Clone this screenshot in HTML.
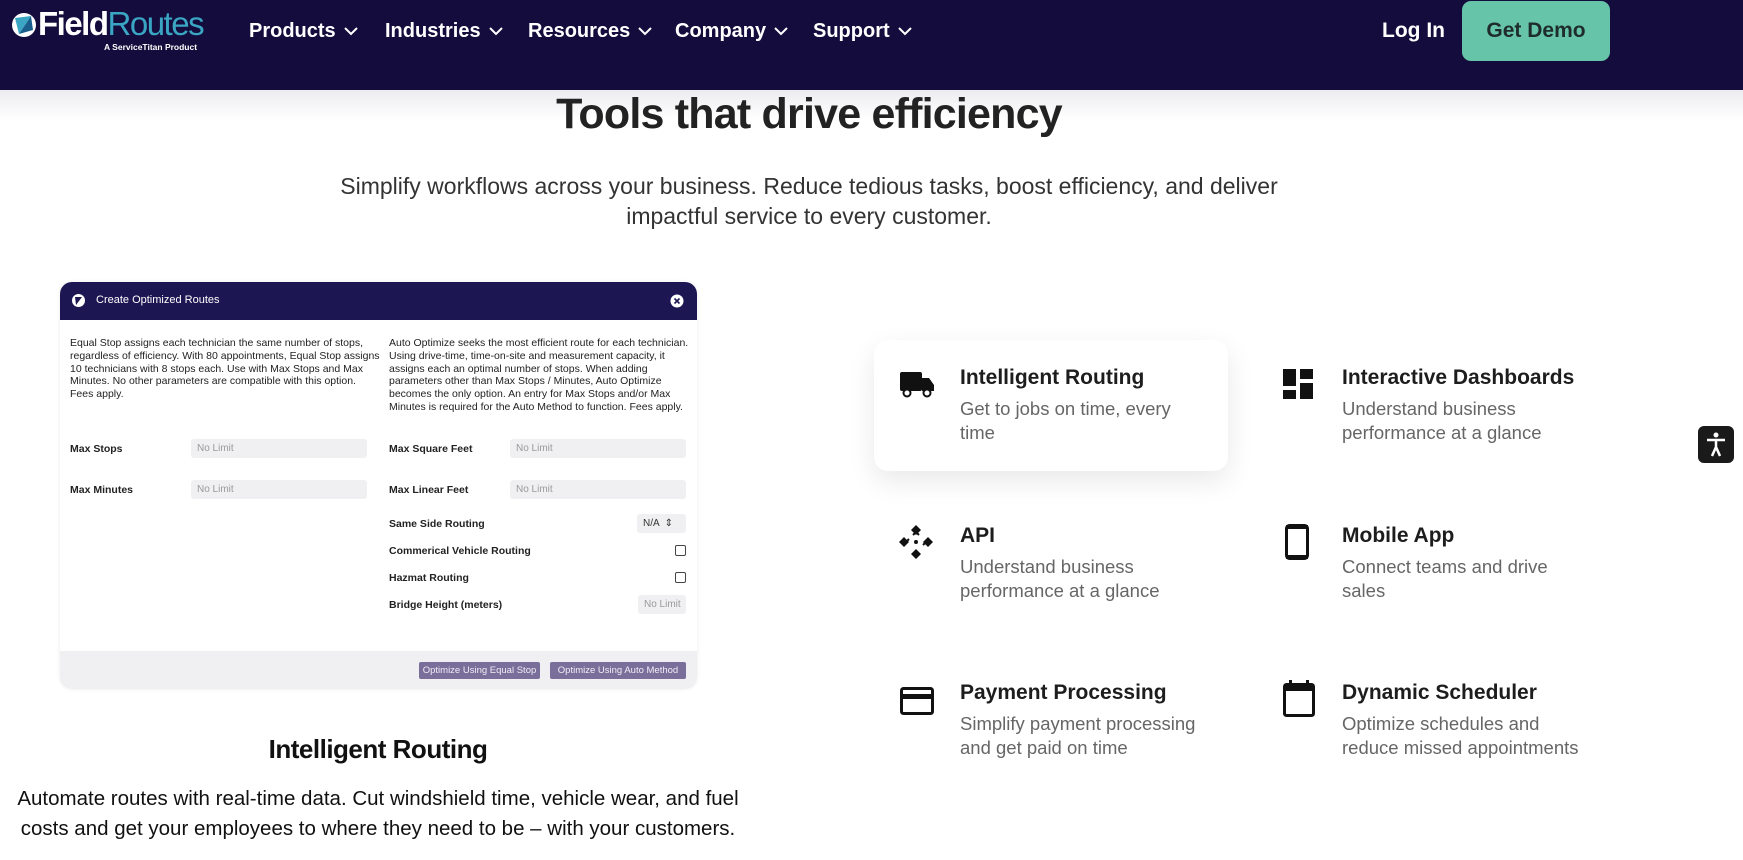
<!DOCTYPE html>
<html><head><meta charset="utf-8"><style>
*{margin:0;padding:0;box-sizing:border-box}
body{width:1743px;height:860px;overflow:hidden;background:#fff;font-family:"Liberation Sans",sans-serif;position:relative;color:#1d1d1d}
.a{position:absolute;white-space:nowrap}
nav{position:absolute;left:0;top:0;width:1743px;height:90px;background:#130c3c}
.shade{position:absolute;left:0;top:90px;width:1743px;height:30px;background:linear-gradient(#ececf0,#fff)}
.ni{color:#fff;font-weight:bold;font-size:20px;top:20px}
.ni svg{margin-left:8px;vertical-align:middle}
.m{font-size:10.5px;color:#222;line-height:12.8px}
.lb{font-size:10.5px;font-weight:bold;color:#222}
.in{background:#f0f0f2;border-radius:3px;height:19px;font-size:10px;color:#999;padding:4px 6px}
.cb{width:11px;height:11px;border:1px solid #444;border-radius:2px}
.bt{background:#7a6f9b;color:#f0eef6;font-size:9.5px;height:17px;line-height:17px;text-align:center;border-radius:2px}
.ft{font-size:21px;font-weight:bold;color:#1d1d1d}
.fd{font-size:18.5px;color:#666;line-height:24px;white-space:normal;width:240px}
</style></head><body>
<nav></nav>
<div class="shade"></div>
<svg class="a" style="left:11px;top:12px" width="26" height="26" viewBox="0 0 26 26"><circle cx="13" cy="13" r="12" fill="#fff"/><path d="M4 6 L20 4 L8 22Z" fill="#3aa6c4"/><path d="M20 4 L22 18 L8 22Z" fill="#1a5f8c"/></svg>
<div class="a" style="left:38px;top:5px;font-size:33px;font-weight:bold;color:#fff;letter-spacing:-1.5px">Field<span style="color:#3aa6c4;font-weight:normal">Routes</span></div>
<div class="a" style="left:104px;top:42px;font-size:8.5px;color:#fff;font-weight:bold">A ServiceTitan Product</div>
<div class="a ni" style="left:249px">Products<svg width="14" height="9"><path d="M1 1l6 6 6-6" stroke="#fff" stroke-width="2" fill="none"/></svg></div>
<div class="a ni" style="left:385px">Industries<svg width="14" height="9"><path d="M1 1l6 6 6-6" stroke="#fff" stroke-width="2" fill="none"/></svg></div>
<div class="a ni" style="left:528px">Resources<svg width="14" height="9"><path d="M1 1l6 6 6-6" stroke="#fff" stroke-width="2" fill="none"/></svg></div>
<div class="a ni" style="left:675px">Company<svg width="14" height="9"><path d="M1 1l6 6 6-6" stroke="#fff" stroke-width="2" fill="none"/></svg></div>
<div class="a ni" style="left:813px">Support<svg width="14" height="9"><path d="M1 1l6 6 6-6" stroke="#fff" stroke-width="2" fill="none"/></svg></div>
<div class="a" style="left:1382px;top:19px;color:#fff;font-weight:bold;font-size:21px">Log In</div>
<div class="a" style="left:1462px;top:1px;width:148px;height:60px;background:#66c5a9;border-radius:9px;color:#1f2d2a;font-size:21px;font-weight:bold;text-align:center;line-height:60px">Get Demo</div>

<div class="a" style="left:0;width:1618px;top:90px;text-align:center;font-size:43px;font-weight:bold;letter-spacing:-0.8px;color:#222">Tools that drive efficiency</div>
<div class="a" style="left:0;width:1618px;top:171px;text-align:center;font-size:23px;line-height:30px;color:#333;white-space:normal">Simplify workflows across your business. Reduce tedious tasks, boost efficiency, and deliver<br>impactful service to every customer.</div>

<div class="a" style="left:60px;top:282px;width:637px;height:407px;background:#fff;border-radius:12px;box-shadow:0 0 4px rgba(0,0,0,.08);overflow:hidden">
 <div style="position:absolute;left:0;top:0;width:637px;height:38px;background:#1c1653"></div>
 <div style="position:absolute;left:0;bottom:0;width:637px;height:38px;background:#f0f0f2"></div>
</div>
<svg class="a" style="left:71px;top:293px" width="15" height="15"><circle cx="7.5" cy="7.5" r="6.5" fill="#fff"/><path d="M4 4h7L5 12z" fill="#1c1653"/></svg>
<div class="a" style="left:96px;top:294px;color:#fff;font-size:11px">Create Optimized Routes</div>
<svg class="a" style="left:670px;top:294px" width="14" height="14"><circle cx="7" cy="7" r="6.5" fill="#fff"/><path d="M4.5 4.5l5 5M9.5 4.5l-5 5" stroke="#1c1653" stroke-width="1.6"/></svg>
<div class="a m" style="left:70px;top:337px">Equal Stop assigns each technician the same number of stops,<br>regardless of efficiency. With 80 appointments, Equal Stop assigns<br>10 technicians with 8 stops each. Use with Max Stops and Max<br>Minutes. No other parameters are compatible with this option.<br>Fees apply.</div>
<div class="a m" style="left:389px;top:337px">Auto Optimize seeks the most efficient route for each technician.<br>Using drive-time, time-on-site and measurement capacity, it<br>assigns each an optimal number of stops. When adding<br>parameters other than Max Stops / Minutes, Auto Optimize<br>becomes the only option. An entry for Max Stops and/or Max<br>Minutes is required for the Auto Method to function. Fees apply.</div>
<div class="a lb" style="left:70px;top:443px">Max Stops</div>
<div class="a in" style="left:191px;top:439px;width:176px">No Limit</div>
<div class="a lb" style="left:70px;top:484px">Max Minutes</div>
<div class="a in" style="left:191px;top:480px;width:176px">No Limit</div>
<div class="a lb" style="left:389px;top:443px">Max Square Feet</div>
<div class="a in" style="left:510px;top:439px;width:176px">No Limit</div>
<div class="a lb" style="left:389px;top:484px">Max Linear Feet</div>
<div class="a in" style="left:510px;top:480px;width:176px">No Limit</div>
<div class="a lb" style="left:389px;top:518px">Same Side Routing</div>
<div class="a in" style="left:637px;top:514px;width:49px;color:#333">N/A &nbsp;⇕</div>
<div class="a lb" style="left:389px;top:545px">Commerical Vehicle Routing</div>
<div class="a cb" style="left:675px;top:545px"></div>
<div class="a lb" style="left:389px;top:572px">Hazmat Routing</div>
<div class="a cb" style="left:675px;top:572px"></div>
<div class="a lb" style="left:389px;top:599px">Bridge Height (meters)</div>
<div class="a in" style="left:638px;top:595px;width:48px">No Limit</div>
<div class="a bt" style="left:419px;top:662px;width:121px">Optimize Using Equal Stop</div>
<div class="a bt" style="left:550px;top:662px;width:136px">Optimize Using Auto Method</div>

<div class="a" style="left:0;width:756px;top:734px;text-align:center;font-size:26px;font-weight:bold;letter-spacing:-0.5px;color:#111">Intelligent Routing</div>
<div class="a" style="left:0;width:756px;top:784px;text-align:center;font-size:20.5px;line-height:30px;color:#111">Automate routes with real-time data. Cut windshield time, vehicle wear, and fuel<br>costs and get your employees to where they need to be – with your customers.</div>

<div class="a" style="left:874px;top:340px;width:354px;height:131px;background:#fff;border-radius:14px;box-shadow:0 10px 28px rgba(0,0,0,.09)"></div>
<svg class="a" style="left:899px;top:370px" width="36" height="28" viewBox="0 0 36 28"><rect x="1" y="2" width="22" height="19" rx="2" fill="#111"/><path d="M23 8h7l5 7v6H23z" fill="#111"/><circle cx="8" cy="23" r="3.5" fill="#fff" stroke="#111" stroke-width="2"/><circle cx="28" cy="23" r="3.5" fill="#fff" stroke="#111" stroke-width="2"/></svg>
<div class="a ft" style="left:960px;top:366px">Intelligent Routing</div>
<div class="a fd" style="left:960px;top:397px">Get to jobs on time, every time</div>

<svg class="a" style="left:1283px;top:369px" width="30" height="30"><rect x="0" y="0" width="13" height="17" fill="#111"/><rect x="17" y="0" width="13" height="10" fill="#111"/><rect x="0" y="21" width="13" height="9" fill="#111"/><rect x="17" y="14" width="13" height="16" fill="#111"/></svg>
<div class="a ft" style="left:1342px;top:366px">Interactive Dashboards</div>
<div class="a fd" style="left:1342px;top:397px">Understand business performance at a glance</div>

<svg class="a" style="left:898px;top:524px" width="36" height="36" viewBox="0 0 36 36"><path d="M18 1l5 5-5 5-5-5z M1 18l5-5 5 5-5 5z M35 18l-5-5-5 5 5 5z M18 35l-5-5 5-5 5 5z" fill="#111"/><path d="M18 8l-3 3M18 8l3 3M8 18l3-3M28 18l-3 3" stroke="#111" stroke-width="2"/><circle cx="18" cy="18" r="2" fill="#111"/></svg>
<div class="a ft" style="left:960px;top:524px">API</div>
<div class="a fd" style="left:960px;top:555px">Understand business performance at a glance</div>

<svg class="a" style="left:1285px;top:524px" width="24" height="36"><rect x="1.5" y="1.5" width="21" height="33" rx="3" fill="none" stroke="#111" stroke-width="3"/><rect x="1" y="1" width="22" height="4" fill="#111"/><rect x="1" y="31" width="22" height="4" fill="#111"/></svg>
<div class="a ft" style="left:1342px;top:524px">Mobile App</div>
<div class="a fd" style="left:1342px;top:555px">Connect teams and drive sales</div>

<svg class="a" style="left:900px;top:687px" width="34" height="28"><rect x="1.5" y="1.5" width="31" height="25" rx="2" fill="none" stroke="#111" stroke-width="3"/><rect x="1" y="7" width="32" height="5" fill="#111"/></svg>
<div class="a ft" style="left:960px;top:681px">Payment Processing</div>
<div class="a fd" style="left:960px;top:712px">Simplify payment processing and get paid on time</div>

<svg class="a" style="left:1283px;top:680px" width="32" height="37"><rect x="1.5" y="4.5" width="29" height="31" rx="2" fill="none" stroke="#111" stroke-width="3"/><rect x="1" y="4" width="30" height="7" fill="#111"/><rect x="6" y="0" width="3" height="6" fill="#111"/><rect x="23" y="0" width="3" height="6" fill="#111"/></svg>
<div class="a ft" style="left:1342px;top:681px">Dynamic Scheduler</div>
<div class="a fd" style="left:1342px;top:712px">Optimize schedules and reduce missed appointments</div>

<div class="a" style="left:1698px;top:426px;width:36px;height:37px;background:#1a1a1a;border-radius:6px"></div>
<svg class="a" style="left:1704px;top:432px" width="24" height="25" viewBox="0 0 24 25"><circle cx="12" cy="3" r="2.5" fill="#fff"/><path d="M3 8h18M12 8v8M12 15l-4 9M12 15l4 9" stroke="#fff" stroke-width="2.5" fill="none"/></svg>
</body></html>
